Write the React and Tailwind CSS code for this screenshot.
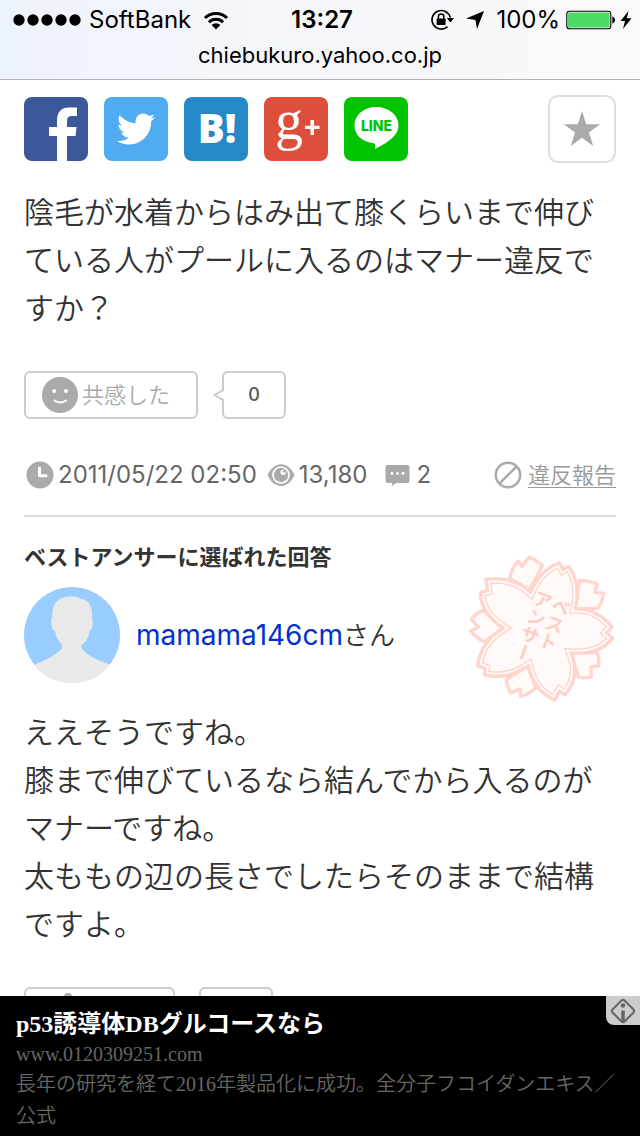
import { FaTwitter } from 'react-icons/fa'

const BODY = "font-['Inter','Noto_Sans_CJK_JP',sans-serif]"

const QUESTION = '陰毛が水着からはみ出て膝くらいまで伸びている人がプールに入るのはマナー違反ですか？'

const ANSWER = [
  'ええそうですね。',
  '膝まで伸びているなら結んでから入るのがマナーですね。',
  '太ももの辺の長さでしたらそのままで結構ですよ。',
]

// petals are shared by the fill, the clip and both outlines of the stamp
const FLOWER =
  'M243 158 C262 112 292 84 329 70 L340 90 L357 80 C384 118 388 160 376 208 C420 206 460 228 487 263 L470 279 L488 296 C460 330 414 344 364 340 C384 390 376 432 345 465 L330 454 L315 481 C272 462 246 424 236 378 C192 408 148 416 104 405 L107 386 L84 378 C90 330 120 290 162 265 C116 236 92 196 93 158 L114 153 L109 120 C156 112 206 124 243 158 Z'

const BACK_PETALS = [
  'M180 116 C184 94 192 78 206 64 L217 80 L238 53 C254 58 266 66 278 78 L240 150 Z',
  'M390 122 C410 122 428 126 443 133 L435 158 L462 161 C460 178 454 192 445 206 L376 208 Z',
  'M442 338 C448 352 449 366 447 379 L424 382 L425 412 C412 416 398 415 386 412 L364 340 Z',
  'M258 446 C244 458 230 466 213 471 L211 447 L183 460 C175 448 171 434 170 420 L236 378 Z',
  'M104 306 C88 300 74 288 63 273 L86 262 L65 239 C74 226 86 217 100 212 L162 265 Z',
]

function StatusBar() {
  return (
    <header className="border-b border-[#b2b2b4] bg-linear-to-r from-[#edf3fb] via-[#f5f6fb] via-40% to-[#f9f9f9] text-black">
      <div className="grid h-10 grid-cols-[1fr_auto_1fr] items-center pl-3 pr-2 text-2xl">
        <div className="flex items-center">
          <svg className="mr-2 h-3 w-[69px]" viewBox="0 0 69 12">
            {[7, 21, 35, 49, 63].map((x) => (
              <circle key={x} cx={x} cy="6" r="5.7" />
            ))}
          </svg>
          <span>SoftBank</span>
          <svg className="ml-3 h-5 w-[26px]" viewBox="0 0 26 20">
            <g fill="none" stroke="#000" strokeWidth="3">
              <path d="M2 8 A15.5 15.5 0 0 1 24 8" />
              <path d="M6 12.2 A10 10 0 0 1 20 12.2" />
            </g>
            <path d="M13 19.5 L8.6 15 A6.2 6.2 0 0 1 17.4 15 Z" />
          </svg>
        </div>
        <span className="font-semibold">13:27</span>
        <div className="flex items-center justify-end">
          <svg className="h-6 w-6" viewBox="0 0 24 24">
            <path d="M17.5 18.7 A9.3 9.3 0 1 1 20.3 9.5" fill="none" stroke="#000" strokeWidth="1.6" />
            <path d="M16.8 10 H24 L20.4 14.5 Z" />
            <rect x="6.6" y="10.5" width="9" height="6.5" rx="0.8" />
            <path d="M8.4 11 V8.8 A2.7 2.7 0 0 1 13.8 8.8 V11" fill="none" stroke="#000" strokeWidth="1.5" />
          </svg>
          <svg className="ml-3 mr-3 h-[18px] w-[18px]" viewBox="0 0 18 18">
            <path d="M18 0 L11 18 L9.5 9 L0 7.5 Z" />
          </svg>
          <span>100%</span>
          <svg className="ml-1.5 h-5 w-[50px]" viewBox="0 0 50 20">
            <rect x="0.8" y="1.3" width="44" height="17.4" rx="2.8" fill="none" stroke="#000" strokeWidth="1.1" />
            <rect x="2" y="2.5" width="41.6" height="15" rx="1.6" fill="#4cd964" />
            <path d="M46.3 6.5 C50 7.5 50 12.5 46.3 13.5 Z" />
          </svg>
          <svg className="ml-1 h-5 w-3" viewBox="0 0 12 20">
            <path d="M8.5 1 L0.5 11 H5 L3 19 L11.5 8.2 H6.8 Z" />
          </svg>
        </div>
      </div>
      <p className="pb-2 text-center text-[22px] leading-[31px]">chiebukuro.yahoo.co.jp</p>
    </header>
  )
}

function ShareRow() {
  const tile = 'flex size-16 items-center justify-center rounded-lg'
  return (
    <div className="flex items-center gap-4">
      <a href="#facebook" aria-label="Facebook" className={`${tile} bg-[#3b5998]`}>
        <svg viewBox="0 0 64 64" fill="#fff">
          <path d="M33 64 V39 H25 V30 H33 V24 C33 15 37 10.5 45 10.5 H53 V19 H48 C44.5 19 43 20.5 43 24 V30 H52.5 L51.5 39 H43 V64 Z" />
        </svg>
      </a>
      <a href="#twitter" aria-label="Twitter" className={`${tile} bg-[#50abf1]`}>
        <FaTwitter className="size-[38px] text-white" />
      </a>
      <a href="#hatena" aria-label="はてなブックマーク" className={`${tile} bg-[#2588c7]`}>
        <svg viewBox="0 0 64 64" fill="#fff">
          <text x="33" y="46" textAnchor="middle" fontFamily="Open Sans, sans-serif" fontWeight="800" fontSize="40">B!</text>
        </svg>
      </a>
      <a href="#google" aria-label="Google+" className={`${tile} bg-[#dd4e3b]`}>
        <svg className="overflow-visible" viewBox="0 0 64 64" fill="#fff">
          <text x="11" y="42" fontFamily="Liberation Serif, serif" fontSize="56">g</text>
          <path d="M46.5 23 H50 V28.7 H55.5 V32 H50 V38 H46.5 V32 H41 V28.7 H46.5 Z" />
        </svg>
      </a>
      <a href="#line" aria-label="LINE" className={`${tile} bg-[#00c300]`}>
        <svg viewBox="0 0 64 64">
          <path d="M32 10 C44.5 10 54.5 18 54.5 28.5 C54.5 37 47 44 31 52 C31.5 49 31.5 47 30 46.2 C18 45 10.5 38 10.5 28.5 C10.5 18 20 10 32 10 Z" fill="#fff" />
          <text x="32.5" y="34" textAnchor="middle" fontFamily="Inter, sans-serif" fontWeight="800" fontSize="14" fill="#00c300">LINE</text>
        </svg>
      </a>
      <button type="button" aria-label="お気に入り" className="ml-auto flex size-[68px] items-center justify-center rounded-[10px] border-2 border-[#ddd]">
        <svg className="size-9" viewBox="0 0 36 36" fill="#aaa">
          <path d="M18 0 L22.2 13.3 H36 L25 21.5 L29.2 35 L18 26.8 L6.8 35 L11 21.5 L0 13.3 H13.8 Z" />
        </svg>
      </button>
    </div>
  )
}

function Reactions() {
  return (
    <div className="flex gap-6">
      <button type="button" className="flex h-12 w-[174px] items-center gap-1 rounded-md border-2 border-[#ccc] pl-4 text-[22px] font-[350] text-[#aaa]">
        <svg className="size-9" viewBox="0 0 36 36">
          <circle cx="18" cy="18" r="18" fill="#aaa" />
          <circle cx="12.2" cy="14" r="2" fill="#fff" />
          <circle cx="24" cy="14" r="2" fill="#fff" />
          <path d="M12.5 23.5 C15.5 26 21 26 24 23.5" fill="none" stroke="#fff" strokeWidth="2" strokeLinecap="round" />
        </svg>
        共感した
      </button>
      <div className="relative flex h-12 w-16 items-center justify-center rounded-md border-2 border-[#ccc] text-lg font-medium text-[#555]">
        <svg className="absolute -left-[11px] top-4 h-3 w-[11px]" viewBox="0 0 11 12">
          <path d="M11 0.5 L1.5 6 L11 11.5" fill="#fff" stroke="#ccc" strokeWidth="2" />
        </svg>
        <span>0</span>
      </div>
    </div>
  )
}

function Meta() {
  return (
    <div className="flex items-center text-2xl text-[#666]">
      <svg className="mr-1 ml-0.5 size-7" viewBox="0 0 28 28">
        <circle cx="14" cy="14" r="13.5" fill="#aaa" />
        <path d="M13.5 7 V14.7 H20" fill="none" stroke="#fff" strokeWidth="3" strokeLinecap="round" strokeLinejoin="round" />
      </svg>
      <time>2011/05/22 02:50</time>
      <svg className="mr-1 ml-2.5 h-6 w-7" viewBox="0 0 28 24">
        <path d="M0.5 12 C7 -2.5 21 -2.5 27.5 12 C21 26.5 7 26.5 0.5 12 Z" fill="#aaa" />
        <circle cx="14" cy="12" r="8" fill="none" stroke="#fff" strokeWidth="1.7" />
        <circle cx="16.2" cy="9.3" r="2.7" fill="#fff" />
        <circle cx="17.2" cy="8.3" r="1.4" fill="#aaa" />
      </svg>
      <span>13,180</span>
      <svg className="mr-1.5 ml-[18px] h-[22px] w-[25px]" viewBox="0 0 25 22">
        <path d="M2.5 1 H22.5 Q24.5 1 24.5 3 V17 Q24.5 19 22.5 19 H11 L7 22 V19 H2.5 Q0.5 19 0.5 17 V3 Q0.5 1 2.5 1 Z" fill="#aaa" />
        <g fill="#fff">
          <circle cx="7" cy="9.5" r="1.4" />
          <circle cx="12.5" cy="9.5" r="1.4" />
          <circle cx="18" cy="9.5" r="1.4" />
        </g>
      </svg>
      <span>2</span>
      <a href="#report" className="ml-auto flex items-center gap-1.5 text-[22px] text-[#999]">
        <svg className="size-7" viewBox="0 0 28 28" fill="none" stroke="#aaa" strokeWidth="2.5">
          <circle cx="14" cy="14" r="12.2" />
          <path d="M5.5 22.5 L22.5 5.5" />
        </svg>
        <span className="border-b border-[#999] font-[350] leading-6">違反報告</span>
      </a>
    </div>
  )
}

function Avatar() {
  return (
    <svg className="size-24" viewBox="0 0 96 96">
      <clipPath id="face">
        <circle cx="48" cy="48" r="48" />
      </clipPath>
      <g clipPath="url(#face)">
        <rect width="96" height="96" fill="#9cf" />
        <path d="M0 84 C10 76 30 72 38 61 V58 C34 54 31.5 49 31 44 C28.5 44 27 39 27.3 32 L28.3 31 C27 18 33 9.5 46 9.5 C50 9.2 54 9.5 57 12 C65 13 69 19 68 32 C70 37 68 43 65.5 44.5 C65 50 62 55 57.5 58.5 V61 C64 70 78 75 88 78 L96 96 H0 Z" fill="#e9e9e9" />
      </g>
    </svg>
  )
}

function BestAnswerStamp() {
  return (
    <svg className="h-[152px] w-[150px]" viewBox="49 40 450 456" role="img">
      <clipPath id="flower">
        <path d={FLOWER} />
      </clipPath>
      <g fill="#fff9f8" stroke="#ffd5cd" strokeWidth="10" strokeLinejoin="round">
        {BACK_PETALS.map((d) => (
          <path key={d} d={d} />
        ))}
        <path d={FLOWER} />
      </g>
      <g clipPath="url(#flower)" fill="none">
        <path d={FLOWER} stroke="#ffd5cd" strokeWidth="29" />
        <path d={FLOWER} stroke="#fff" strokeWidth="20" />
      </g>
      <path d={FLOWER} fill="none" stroke="#ffd5cd" strokeWidth="10" strokeLinejoin="round" />
      <g fill="#ffcdc4" fontFamily="Noto Sans CJK JP, sans-serif" fontWeight="700" fontSize="56" textAnchor="middle">
        <text x="315" y="254" transform="rotate(20 315 254)" style={{ writingMode: 'vertical-rl' }}>ベスト</text>
        <text x="251" y="260" transform="rotate(20 251 260)" style={{ writingMode: 'vertical-rl' }}>アンサー</text>
      </g>
    </svg>
  )
}

function Ad() {
  return (
    <aside className="fixed inset-x-0 bottom-0 bg-black px-4 pt-3 pb-1 font-['Liberation_Serif','Noto_Sans_CJK_JP',serif] text-xl">
      <a href="#ad" className="block">
        <h2 className="text-2xl leading-8 font-bold text-white">p53誘導体DBグルコースなら</h2>
        <p className="leading-7 text-[#666]">www.0120309251.com</p>
        <p className="leading-8 font-[350] text-[#666]">長年の研究を経て2016年製品化に成功。全分子フコイダンエキス／公式</p>
      </a>
      <button type="button" aria-label="広告について" className="absolute top-0 right-0 flex h-[29px] w-[34px] items-center justify-center rounded-bl-lg bg-[#ccc]">
        <svg className="size-[26px]" viewBox="0 0 26 26">
          <rect x="4.5" y="4.5" width="17" height="17" rx="2.5" transform="rotate(45 13 13)" fill="none" stroke="#666" strokeWidth="2" />
          <circle cx="13" cy="7.5" r="2.2" fill="#666" />
          <path d="M13 12.5 V24" stroke="#666" strokeWidth="3.5" />
        </svg>
      </button>
    </aside>
  )
}

export default function App() {
  return (
    <div className={`min-h-screen bg-white text-[#333] ${BODY}`}>
      <StatusBar />
      <main className="px-6 pt-[15px] pb-20">
        <ShareRow />
        <p className="mt-[25px] mb-[39px] text-[30px] leading-12 font-[350]">{QUESTION}</p>
        <Reactions />
        <div className="mt-10 border-b-2 border-[#ddd] pb-6">
          <Meta />
        </div>

        <section>
          <div className="flex justify-between pt-6">
            <div>
              <h2 className="text-[22px] leading-8 font-bold">ベストアンサーに選ばれた回答</h2>
              <div className="mt-3.5 flex items-center gap-4">
                <Avatar />
                <p className="text-[26px] font-[350]">
                  <a href="#user" className="text-[28px] font-normal text-[#03c]">mamama146cm</a>
                  さん
                </p>
              </div>
            </div>
            <div className="mt-3">
              <BestAnswerStamp />
            </div>
          </div>
          <div className="mt-[3px] mb-[39px] text-[30px] leading-12 font-[350]">
            {ANSWER.map((line) => (
              <p key={line}>{line}</p>
            ))}
          </div>
          <div className="flex gap-6">
            <button type="button" aria-label="ナイス" className="h-12 w-[151px] rounded-md border-2 border-[#ccc] pl-8">
              <svg className="size-9" viewBox="0 0 36 36" fill="#aaa">
                <path d="M2 14 H6 V4 Q6 0 10 0 Q14 0 14 4 V12 H26 V30 H2 Z" />
              </svg>
            </button>
            <div className="h-12 w-[74px] rounded-md border-2 border-[#ccc]" />
          </div>
        </section>
      </main>
      <Ad />
    </div>
  )
}
